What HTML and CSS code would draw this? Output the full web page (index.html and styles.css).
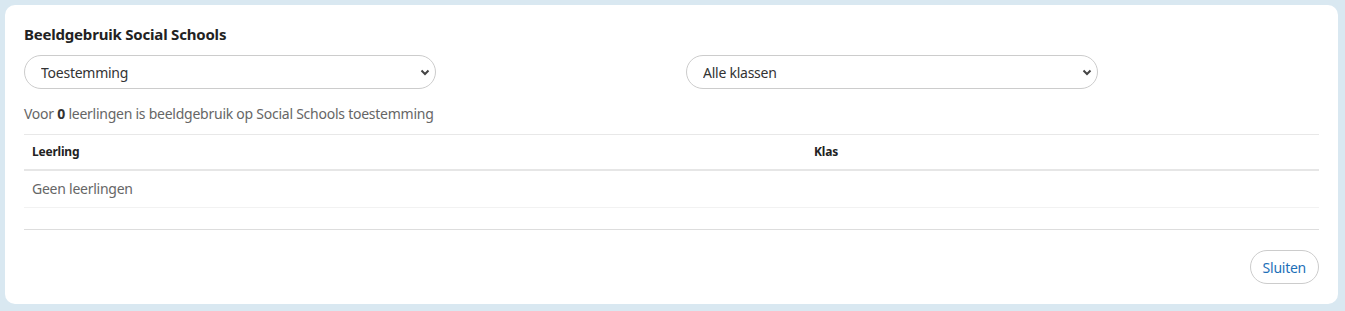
FILE: index.html
```html
<!DOCTYPE html>
<html lang="nl">
<head>
  <meta charset="UTF-8">
  <title>Beeldgebruik Social Schools</title>
  <link rel="stylesheet" href="styles.css">
</head>
<body>
  <div class="modal">
    <h2 class="modal-title">Beeldgebruik Social Schools</h2>
    <div class="filters">
      <div class="select-wrap">
        <select class="select">
          <option>Toestemming</option>
          <option>Geen toestemming</option>
        </select>
        <svg class="chevron" width="10" height="7" viewBox="0 0 10 7"><path d="M1.5 1.5 5 5l3.5-3.5" fill="none" stroke="#444" stroke-width="2"/></svg>
      </div>
      <div class="select-wrap">
        <select class="select">
          <option>Alle klassen</option>
        </select>
        <svg class="chevron" width="10" height="7" viewBox="0 0 10 7"><path d="M1.5 1.5 5 5l3.5-3.5" fill="none" stroke="#444" stroke-width="2"/></svg>
      </div>
    </div>
    <p class="summary">Voor <strong>0</strong> leerlingen is beeldgebruik op Social Schools toestemming</p>
    <table class="students">
      <thead>
        <tr><th class="col-name">Leerling</th><th>Klas</th></tr>
      </thead>
      <tbody>
        <tr><td>Geen leerlingen</td><td></td></tr>
      </tbody>
    </table>
    <div class="modal-footer">
      <button class="btn-close">Sluiten</button>
    </div>
  </div>
</body>
</html>
```

FILE: styles.css
```css
body { margin:0; padding:5px 7px 8px 5px; background:#d9e8f1; font-family:"Noto Sans", sans-serif; font-size:14px; letter-spacing:-.25px; color:#666; }
.modal { background:#fff; border-radius:10px; padding:18px 19px 20px 19px; }
.modal-title { margin:0 0 10px; font-size:15px; line-height:22px; font-weight:700; letter-spacing:-.2px; color:#222; }
.filters { display:flex; gap:250px; }
.select-wrap { position:relative; width:412px; }
.select { appearance:none; -webkit-appearance:none; width:100%; height:34px; padding:0 30px 0 16px; border:1px solid #ccc; border-radius:17px; background:#fff; font-family:inherit; font-size:14px; letter-spacing:-.25px; color:#333; outline:none; }
.chevron { position:absolute; right:6px; top:14px; }
.summary { margin:15px 0 10px; line-height:20px; }
.summary strong { color:#333; }
.students { width:100%; border-collapse:collapse; border-top:1px solid #e8e8e8; }
.students th { text-align:left; font-size:12px; font-weight:700; letter-spacing:-.2px; color:#222; padding:8px 8px; line-height:18px; border-bottom:2px solid #e6e6e6; }
.students th.col-name { width:766px; }
.students td { padding:8px 8px 9px; line-height:19px; border-bottom:1px solid #f2f2f2; }
.modal-footer { margin-top:21px; border-top:1px solid #ddd; padding-top:20px; display:flex; justify-content:flex-end; }
.btn-close { height:34px; padding:0 12px; border:1px solid #ccc; border-radius:17px; background:#fff; color:#1d6fb8; font-family:inherit; font-size:14px; letter-spacing:-.25px; cursor:pointer; }
```
